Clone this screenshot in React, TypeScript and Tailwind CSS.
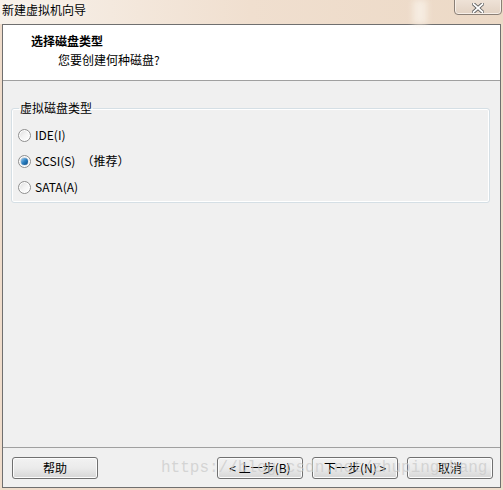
import React from "react";

const FONT = { fontFamily: '"Noto Sans CJK SC", "Noto Sans", sans-serif' };

function Radio({ checked }: { checked?: boolean }) {
  return (
    <span className="relative inline-flex h-[13px] w-[13px] items-center justify-center rounded-full border border-[#8f8f8f] bg-gradient-to-br from-[#dcdcdc] via-[#f4f4f4] to-[#ffffff] shadow-[inset_0_0_0_1px_#ffffff]">
      {checked && (
        <span className="h-[7px] w-[7px] rounded-full bg-gradient-to-br from-[#9bd0f0] via-[#2a7fc0] to-[#0d4c86] shadow-[0_0_1px_#1a5fa0]" />
      )}
    </span>
  );
}

function Btn({ children }: { children: React.ReactNode }) {
  return (
    <button className="flex h-[22px] w-[86px] items-center justify-center rounded-[3px] border border-[#707070] bg-gradient-to-b from-[#f2f2f2] via-[#ebebeb] to-[#d6d6d6] text-[12px] leading-none text-black shadow-[inset_0_0_0_1px_#fcfcfc]">
      {children}
    </button>
  );
}

export default function App() {
  return (
    <div
      className="relative flex h-[490px] w-[503px] flex-col overflow-hidden bg-[#efdccb]"
      style={FONT}
    >
      {/* Title bar */}
      <div className="relative flex h-[24px] items-start bg-gradient-to-r from-[#f7f1ea] via-[#f0dfcf] to-[#ecd9c6]">
        <span className="pl-[2px] pt-[2px] text-[12px] leading-[16px] text-black [text-shadow:0_0_6px_#ffffff]">
          新建虚拟机向导
        </span>
        <div className="absolute left-[413px] top-0 h-[24px] w-[14px] bg-[#f6ece1] blur-[3px]" />
        <div className="absolute left-[454px] top-[-2px] flex h-[17px] w-[48px] items-center justify-center rounded-b-[4px] border border-[#8a7f76] bg-gradient-to-b from-[#efe3d8] to-[#e2d2c3] shadow-[inset_0_0_0_1px_#f7efe8]">
          <svg width="12" height="10" viewBox="0 0 12 10" className="mt-[2px]">
            <path d="M1.5 1 L10.5 9 M10.5 1 L1.5 9" stroke="#5a5a5a" strokeWidth="3.6" strokeLinecap="square" />
            <path d="M1.5 1 L10.5 9 M10.5 1 L1.5 9" stroke="#ffffff" strokeWidth="1.8" strokeLinecap="square" />
          </svg>
        </div>
      </div>

      {/* Content window */}
      <div className="ml-[2px] flex h-[464px] w-[499px] flex-col border border-[#6f6f6f] bg-[#f0f0f0]">
        {/* Header */}
        <div className="h-[56px] border-b border-[#a0a0a0] bg-white pl-[28px] pt-[8px]">
          <div className="text-[12px] font-bold leading-[16px] text-black">选择磁盘类型</div>
          <div className="mt-[3px] pl-[27px] text-[12px] leading-[16px] text-black">您要创建何种磁盘?</div>
        </div>

        {/* Body */}
        <div className="flex-1 pl-[8px] pr-[10px] pt-[19px]">
          <fieldset className="m-0 h-[103px] rounded-[3px] border border-[#d5dfe5] px-[6px] pb-0 pt-[6px] shadow-[inset_0_0_0_1px_#ffffff]">
            <legend className="ml-[1px] px-[1px] text-[12px] leading-[16px] text-black">虚拟磁盘类型</legend>
            <div className="flex h-[26px] items-center gap-[4px] text-[12px] text-black">
              <Radio />
              <span>IDE(I)</span>
            </div>
            <div className="flex h-[26px] items-center gap-[4px] text-[12px] text-black">
              <Radio checked />
              <span>SCSI(S)</span>
              <span className="ml-[2px]">（推荐）</span>
            </div>
            <div className="flex h-[26px] items-center gap-[4px] text-[12px] text-black">
              <Radio />
              <span>SATA(A)</span>
            </div>
          </fieldset>
        </div>

        {/* Footer */}
        <div className="flex h-[40px] items-start justify-between border-t border-[#a0a0a0] pl-[9px] pr-[7px] pt-[9px]">
          <Btn>帮助</Btn>
          <div className="flex gap-[9px]">
            <Btn>&lt; 上一步(B)</Btn>
            <Btn>下一步(N) &gt;</Btn>
            <Btn>取消</Btn>
          </div>
        </div>
      </div>

      {/* Watermark */}
      <span
        className="pointer-events-none absolute left-[161px] top-[457px] whitespace-nowrap text-[16px] leading-[22px] text-[#c8c8c8]/70"
        style={{ fontFamily: '"Liberation Mono", monospace' }}
      >
        https://blog.csdn.net/zhupingzhang
      </span>
    </div>
  );
}
